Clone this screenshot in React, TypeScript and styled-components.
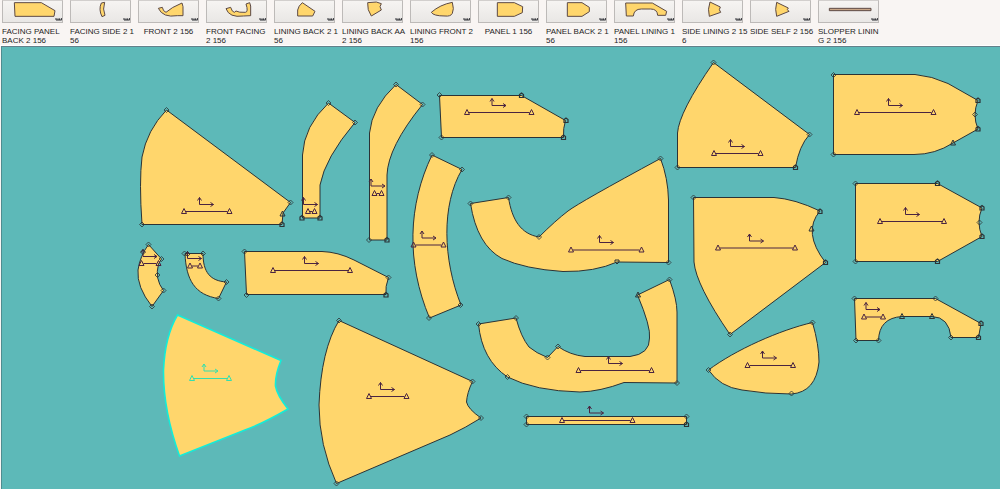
import React from 'react';
import styled, { createGlobalStyle } from 'styled-components';

const GlobalStyle = createGlobalStyle`
  *, *::before, *::after { box-sizing: border-box; }
  body { margin: 0; background: #f9f5f3; }
`;

const Page = styled.div`
  display: flex;
  flex-direction: column;
  min-height: 100vh;
  font-family: 'Liberation Sans', Arial, sans-serif;
  color: #1d1d24;
`;

const PieceBar = styled.nav`
  display: flex;
  gap: 4px;
  height: 46px;
  overflow: hidden;
  background: #f9f5f3;
  border-bottom: 1px solid #ffffff;
`;

const PieceButton = styled.button`
  display: flex;
  flex: none;
  flex-direction: column;
  gap: 4px;
  width: 64px;
  padding: 0 0 0 2px;
  border: 0;
  background: none;
  color: inherit;
  font: inherit;
  cursor: pointer;
`;

const Thumb = styled.svg`
  display: block;
  flex: none;
  width: 61px;
  height: 23px;
  border: 1px solid #bdbab8;
  border-top-color: #d2cfcd;
  background: linear-gradient(#f6f4f2, #e9e7e5);
`;

const PieceName = styled.span<{ $centered: boolean }>`
  width: 61px;
  font-size: 8px;
  line-height: 9px;
  white-space: pre;
  text-align: ${(p) => (p.$centered ? 'center' : 'left')};
`;

const Workspace = styled.main`
  display: flex;
  flex: 1;
  min-height: 440px;
  margin-left: 1px;
  border-top: 1px solid #64808a;
  border-left: 1px solid #4f8c90;
  background: #5db9b8;
`;

const Drawing = styled.svg`
  display: block;
  flex: 1;
  width: 100%;
`;

type Thumbnail = { lines: string[]; d: string; fill?: string };

const FILL = '#ffd66c';

const thumbnails: Thumbnail[] = [
  { lines: ['FACING PANEL', 'BACK 2 156'], d: 'M37 8L118 8L159 32L156 49L39 49Z' },
  { lines: ['FACING SIDE 2 1', '56'], d: 'M94 9L104 7Q97 28 105 46L96 50Q85 28 94 9Z' },
  { lines: ['FRONT 2 156'], d: 'M61 25L73 22Q75 34 84 37Q100 22 132 9L135 20L135 47L118 47Q75 54 61 25Z' },
  { lines: ['FRONT FACING', '2 156'], d: 'M60 26L74 22Q78 36 85 37L90 33Q98 38 118 37Q128 36 120 12L131 8L134 18L134 47L112 48Q70 54 60 26Z' },
  { lines: ['LINING BACK 2 1', '56'], d: 'M85 8L123 34L116 48L71 48L71 30Q73 18 85 8Z' },
  { lines: ['LINING BACK AA', '2 156'], d: 'M77 8L103 6L118 11L114 20L118 30L88 48Q75 30 77 8Z' },
  { lines: ['LINING FRONT 2', '156'], d: 'M64 37Q90 14 127 7Q133 28 127 40Q122 50 105 48Q70 48 64 37Z' },
  { lines: ['PANEL 1 156'], d: 'M58 8L109 8L134 20L133 38L109 49L58 49Z' },
  { lines: ['PANEL BACK 2 1', '56'], d: 'M64 8L108 8L130 22L130 35L108 49L64 49Z' },
  { lines: ['PANEL LINING 1', '156'], d: 'M35 9L115 9L158 34L155 46L131 46Q130 27 110 27L82 27Q60 27 58 48L37 48Z' },
  { lines: ['SIDE LINING 2 15', '6'], d: 'M84 6L115 21L112 29L116 37L82 49Q76 28 84 6Z' },
  { lines: ['SIDE SELF 2 156'], d: 'M80 7L115 24L112 29L117 34L80 49Q74 28 80 7Z' },
  { lines: ['SLOPPER LININ', 'G 2 156'], d: 'M34 25L159 25L159 32L34 32Z', fill: '#c9a585' },
];

type Point = [number, number];

type Piece = {
  name: string;
  d: string;
  axis: Point;
  // left x, right x, y of the grain line
  grain: [number, number, number];
  corners?: Point[];
  anchors?: Point[];
  notches?: Point[];
  vents?: Point[];
  selected?: boolean;
};

const pieces: Piece[] = [
  {
    name: 'Lining back',
    d: 'M166.5 110L290.5 202.5L283 213L282 224.5L142 224.5Q139 182 142 157Q147 130 166.5 110Z',
    axis: [199.5, 204.5], grain: [184, 229.5, 211.5],
    corners: [[166.5, 110], [290.5, 202.5], [142, 224.5]], anchors: [[282, 224.5]], notches: [[282.5, 214]],
  },
  {
    name: 'Facing strip short',
    d: 'M328.5 103L355 122.5Q325 158 320 185L320 218L302.5 218L302.5 155Q304 126 328.5 103Z',
    axis: [303.5, 204.5], grain: [308, 314.5, 211.5],
    corners: [[328.5, 103], [355, 122.5]], anchors: [[302, 218], [320, 218]],
  },
  {
    name: 'Facing strip long',
    d: 'M396 84.5L422.5 104.5Q388 147 387 175L387 240L369.5 240L369.5 133Q372 107 396 84.5Z',
    axis: [371, 186], grain: [374.5, 381.5, 193.5],
    corners: [[396, 84.5], [422.5, 104.5], [369, 240]], anchors: [[387, 240]],
  },
  {
    name: 'Facing side',
    d: 'M432 155L462 169.5C441 205 443 260 461 305L429.5 318C406 262 408 205 432 155Z',
    axis: [422, 238], grain: [413.5, 443.5, 245],
    corners: [[432, 155], [462, 169.5], [460.5, 305], [429, 318]],
  },
  {
    name: 'Facing panel back',
    d: 'M439.5 95.5L521.5 95.5L565.5 120.5Q563 128 563.5 137.5L441.5 137.5Z',
    axis: [492, 105.5], grain: [467, 531.5, 112.5],
    corners: [[439.5, 95], [441.5, 137.5]], anchors: [[521.5, 95.5], [566, 120.5], [563.5, 137.5]],
  },
  {
    name: 'Front',
    d: 'M470.5 203.5L508.5 197.5C512 220 521 234 539 237Q555 221 568 211Q580 202 660.5 158.5Q668 178 668.5 200L668.5 262.5L617 262Q595 272 563 271.5Q525 269 502 258.5Q477 245 470.5 203.5Z',
    axis: [599.5, 242.5], grain: [571, 641.5, 250],
    corners: [[470.5, 203.5], [508.5, 197.5], [539, 237], [660.5, 158.5], [668.5, 262.5]], vents: [[617, 262]],
  },
  {
    name: 'Lining side back',
    d: 'M713.5 62.5L809.5 134.5Q799 146 795.5 167.5L677.5 167.5L677.5 133Q679 112 713.5 62.5Z',
    axis: [730.5, 146.5], grain: [714, 760.5, 153.5],
    corners: [[713.5, 62.5], [809.5, 134.5], [677.5, 167.5]], anchors: [[795.5, 167.5]],
  },
  {
    name: 'Panel',
    d: 'M833.5 74.5L915 74.5Q932 76 948 83.5L978 100.5Q972 115 978 129L953 143Q935 154.5 914 154.5L833.5 154.5Z',
    axis: [888.5, 105.5], grain: [857, 933.5, 112.5],
    corners: [[833.5, 75], [833.5, 154.5], [975, 114.5]], anchors: [[978, 100.5], [978, 129]], notches: [[953, 143]],
  },
  {
    name: 'Panel back',
    d: 'M855.5 183.5L937.5 183.5L982 208Q976 222 982 236.5L937.5 261.5L855.5 261.5Z',
    axis: [905.5, 214.5], grain: [880, 944, 221.5],
    corners: [[855.5, 183.5], [855.5, 261.5], [979.5, 222.5]], anchors: [[937.5, 183.5], [982, 208], [982, 236.5], [937.5, 261.5]],
  },
  {
    name: 'Lining back AA',
    d: 'M693.5 197.5L774 197.5Q795 199 820 211Q802 232 825.5 262.5L730 334.5Q696 285 694 262Z',
    axis: [749.5, 241], grain: [718, 795, 248],
    corners: [[693.5, 197.5], [730, 334.5]], anchors: [[820, 211.5], [825.5, 262.5]], notches: [[811.5, 229]],
  },
  {
    name: 'Facing side small',
    d: 'M148.5 244.5L161.5 259L158.5 264Q154.5 279 163.5 290.5L152 306.5Q136.5 287 138 270Q140 256 148.5 244.5Z',
    axis: [143, 256.5], grain: [141.5, 158.5, 263.5],
    corners: [[148.5, 244.5], [161.5, 259], [143, 252], [157.5, 275], [163.5, 290.5], [152, 306.5]],
  },
  {
    name: 'Facing front small',
    d: 'M185 253.5L203 253.5C203 272 210 281 226.5 282L218.5 298.5C195 295 186 280 185 253.5Z',
    axis: [187.5, 258.5], grain: [190, 200, 266],
    corners: [[184.5, 253.5], [187.5, 254], [203, 253.5], [226.5, 282], [218.5, 298.5]],
  },
  {
    name: 'Facing panel',
    d: 'M244.5 251.5L322 251.5Q338 252 354 260L388.5 277.5Q385 287 386 294.5L246.5 294.5Z',
    axis: [304.5, 263.5], grain: [273, 350, 270.5],
    corners: [[244.5, 251.5], [388.5, 277.5], [246.5, 295]], anchors: [[386, 295]],
  },
  {
    name: 'Side self',
    d: 'M177.5 315L281 360.5Q275 375 275.5 386Q277 395 288 409Q262 424 245 430L179.5 456Q163 410 163.5 370Q165 336 177.5 315Z',
    axis: [204, 371], grain: [192, 229, 378.5], selected: true,
  },
  {
    name: 'Side lining',
    d: 'M339 320.5L472.5 381.5Q467 393 466.5 402Q468 409 481 418Q465 428 450 435L336.5 483.5Q319 445 319 405Q321 350 339 320.5Z',
    axis: [380.5, 389.5], grain: [369, 406.5, 396.5],
    corners: [[339, 320.5], [472.5, 381.5], [481, 418], [336.5, 483.5]],
  },
  {
    name: 'Front facing',
    d: 'M478.5 324L516 318Q521 337 529 347Q536 353 547.5 357.5L558 346.5Q570 355 585 356.5L630 356.5Q650 354 649.5 338Q651 327 637.5 295L669.5 279.5Q677 300 677 312L677 383L624 382.5Q600 391.5 580 392Q535 391 507.5 377Q482 360 478.5 324Z',
    axis: [608.5, 363.5], grain: [578.5, 651.5, 370.5],
    corners: [[478.5, 324], [516, 318], [547.5, 357.5], [558, 346.5], [669.5, 279.5], [677, 383], [507.5, 377]], notches: [[638, 295]],
  },
  {
    name: 'Slopper lining',
    d: 'M526.5 416.5L686.5 416.5L686.5 424.5L526.5 424.5Z',
    axis: [589.5, 413], grain: [562, 632.5, 420.5],
    corners: [[526.5, 416.5], [686.5, 416.5], [526.5, 424.5]], anchors: [[686.5, 424.5]],
  },
  {
    name: 'Lining front',
    d: 'M708.5 370C735 350 780 330 812.5 322.5Q819 345 819 362Q816 392 791.5 394Q765 394 742 390Q720 387 708.5 370Z',
    axis: [762.5, 358], grain: [747.5, 793, 365.5],
    corners: [[708.5, 370], [812.5, 322.5], [791.5, 393.5]],
  },
  {
    name: 'Panel lining',
    d: 'M854.5 298.5L935.5 298.5L981 323.5L978.5 337.5L951 337.5Q949 317 932 316.5L902 316.5Q879 318 878.5 340.5L856 340.5Z',
    axis: [866, 309.5], grain: [864, 883, 317],
    corners: [[854.5, 298.5], [935.5, 298.5], [856, 340.5], [878.5, 340.5], [951, 337.5]],
    anchors: [[981, 323.5], [978.5, 337.5]], notches: [[902, 316.5], [932, 316.5]],
  },
];

const triangle = (x: number, y: number) => `M${x} ${y - 3}L${x + 2.5} ${y + 2}L${x - 2.5} ${y + 2}Z`;

function PatternPiece({ piece }: { piece: Piece }) {
  const ink = piece.selected ? '#14ecd8' : '#2b3336';
  const mark = piece.selected ? '#35dfae' : '#4a2440';
  const [ax, ay] = piece.axis;
  const [gl, gr, gy] = piece.grain;
  return (
    <g fill="none">
      <title>{piece.name}</title>
      <path d={piece.d} fill={FILL} stroke={ink} strokeWidth={piece.selected ? 1.6 : 1} />
      <g stroke={mark}>
        <path d={`M${ax} ${ay - 7}V${ay}H${ax + 14}M${ax - 2} ${ay - 4}L${ax} ${ay - 7}L${ax + 2} ${ay - 4}M${ax + 11} ${ay - 2}L${ax + 14} ${ay}L${ax + 11} ${ay + 2}`} />
        <path d={`M${gl + 2} ${gy}H${gr - 2}`} />
        <path d={triangle(gl, gy) + triangle(gr, gy)} />
      </g>
      <g stroke={ink}>
        {piece.corners?.map(([x, y]) => (
          <path key={`${x},${y}`} d={`M${x} ${y - 2.5}L${x + 2.5} ${y}L${x} ${y + 2.5}L${x - 2.5} ${y}Z`} strokeWidth={0.8} />
        ))}
        {piece.anchors?.map(([x, y]) => (
          <path key={`${x},${y}`} d={`M${x - 2} ${y + 2}V${y - 1}L${x} ${y - 2.5}L${x + 2} ${y - 1}V${y + 2}Z`} strokeWidth={1.2} />
        ))}
        {piece.notches?.map(([x, y]) => <path key={`${x},${y}`} d={triangle(x, y)} />)}
        {piece.vents?.map(([x, y]) => (
          <path key={`${x},${y}`} d={`M${x - 2} ${y - 2}H${x + 2}V${y}L${x} ${y + 2}L${x - 2} ${y}Z`} />
        ))}
      </g>
    </g>
  );
}

export default function App() {
  return (
    <Page>
      <GlobalStyle />
      <PieceBar aria-label="Pattern pieces">
        {thumbnails.map((t) => (
          <PieceButton key={t.lines.join('')} type="button">
            <Thumb viewBox="3 3 177 63" aria-hidden="true">
              <path d={t.d} fill={t.fill ?? FILL} stroke="#5d4a45" strokeWidth="3" />
              <path d="M162 54V60H179V54M168 55V60M173 55V60" fill="none" stroke="#2f3036" strokeWidth="3" />
            </Thumb>
            <PieceName $centered={t.lines.length === 1}>{t.lines.join('\n')}</PieceName>
          </PieceButton>
        ))}
      </PieceBar>
      <Workspace>
        <Drawing role="img" aria-label="Pattern layout">
          <g transform="translate(-2 -47)">
            {pieces.map((p) => <PatternPiece key={p.name} piece={p} />)}
          </g>
        </Drawing>
      </Workspace>
    </Page>
  );
}
